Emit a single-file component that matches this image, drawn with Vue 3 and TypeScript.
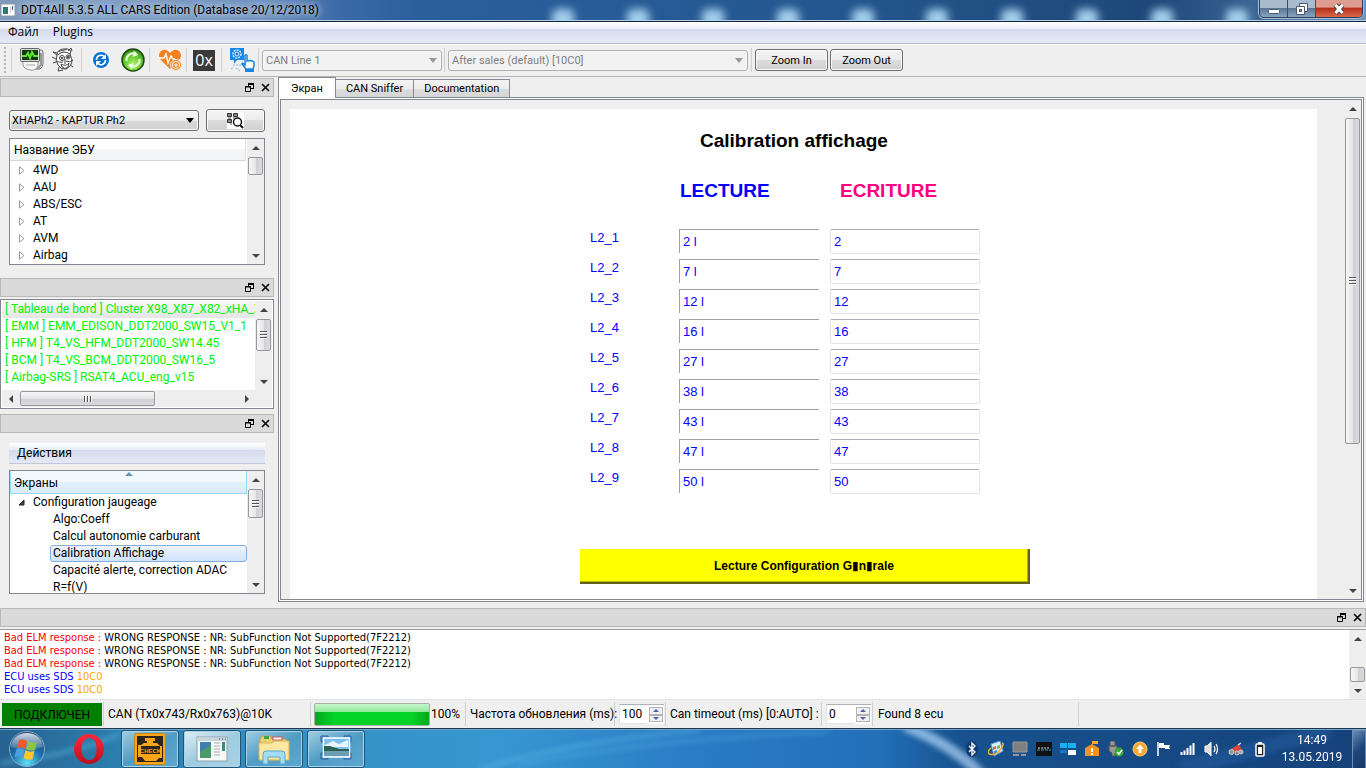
<script setup lang="ts">
import { ref } from 'vue'

interface Row { label: string; read: string; write: string }

const families: string[] = ['4WD', 'AAU', 'ABS/ESC', 'AT', 'AVM', 'Airbag']
const ecus: string[] = [
  '[ Tableau de bord ] Cluster X98_X87_X82_xHA_X98',
  '[ EMM ] EMM_EDISON_DDT2000_SW15_V1_1',
  '[ HFM ] T4_VS_HFM_DDT2000_SW14.45',
  '[ BCM ] T4_VS_BCM_DDT2000_SW16_5',
  '[ Airbag-SRS ] RSAT4_ACU_eng_v15',
]
const screens: string[] = [
  'Algo:Coeff',
  'Calcul autonomie carburant',
  'Calibration Affichage',
  'Capacité alerte, correction ADAC',
  'R=f(V)',
]
const tabs: string[] = ['Экран', 'CAN Sniffer', 'Documentation']
const activeTab = ref('Экран')
const activeScreen = ref('Calibration Affichage')
const rows = ref<Row[]>(
  ['2', '7', '12', '16', '27', '38', '43', '47', '50'].map((v, i) => ({
    label: `L2_${i + 1}`,
    read: `${v} l`,
    write: v,
  })),
)
const refresh = ref('100')
const timeout = ref('0')
</script>

<template>
  <div class="app">
    <header class="titlebar">
      <div class="glows"><i v-for="g in 10" :key="g"></i></div>
      <svg class="app-icon" viewBox="0 0 16 14" width="16" height="14"><rect x="1" y="1" width="14" height="12" fill="#fff" stroke="#8c9aa8" /><rect x="3" y="4" width="5" height="7" fill="#2f7a70" /><path d="M10 5h1M10 7h1M10 9h1" stroke="#999" /><rect x="12" y="3" width="1" height="4" fill="#2a6a9a" /></svg>
      <h1>DDT4All 5.3.5 ALL CARS Edition (Database 20/12/2018)</h1>
      <div class="winbtns">
        <button class="wb" aria-label="Minimize"><svg width="12" height="12" viewBox="0 0 12 12"><rect x=".5" y="6.500" width="11" height="4" rx="1" fill="#fff" stroke="#4a5a72" /></svg></button>
        <button class="wb" aria-label="Restore"><svg width="12" height="12" viewBox="0 0 12 12"><path d="M3.500.5h8v8h-8z" fill="#fff" stroke="#4a5a72" /><path d="M.5 3.500h8v8h-8z" fill="#fff" stroke="#4a5a72" /><rect x="3.500" y="6.500" width="2" height="2" fill="#8090a8" stroke="#4a5a72" /></svg></button>
        <button class="wb close" aria-label="Close"><svg width="12" height="12" viewBox="0 0 12 12"><path d="M2.500 2l7 8M9.500 2l-7 8" stroke="#54404a" stroke-width="5" /><path d="M2.500 2l7 8M9.500 2l-7 8" stroke="#fff" stroke-width="3" /></svg></button>
      </div>
    </header>

    <nav class="menubar"><button>Файл</button><button>Plugins</button></nav>

    <div class="toolbar">
      <span class="grip"></span><span class="sep"></span>
      <button class="tool" aria-label="Scope">
        <svg width="26" height="26" viewBox="0 0 26 26"><path d="M5 3h17q2 0 2 2v12q0 3-3 5H9q-4 0-4-4z" fill="#e4e4e0" stroke="#777" /><path d="M22 6v12l-4 4" fill="none" stroke="#999" stroke-width="2" /><path d="M4 14h15v5q-2 5-8 4-6-1-7-5z" fill="#f7f7f4" stroke="#999" /><path d="M7 18h9" stroke="#aaa" /><rect x="1.500" y="1.500" width="19" height="13" rx="1" fill="#d8d8d4" stroke="#666" /><rect x="3" y="3" width="16" height="10" fill="#123a10" /><path d="M3 9h4l2-3 2 5 2-6 2 4h4" fill="none" stroke="#5be82a" stroke-width="2" /></svg>
      </button>
      <button class="tool wide" aria-label="Expert">
        <svg width="26" height="26" viewBox="0 0 26 26" fill="none" stroke="#444"><path d="M6 8q0-5 6-6 5-1 8 2l-1 3 2 6q0 6-6 9-5 1-8-4-3-4-1-10z" fill="#fff" /><path d="M7 8q3-3 6-3t6 2M8 5l3-2M11 4l5-2M17 4l3-3 1 3M6 8l-4-3 4 1M5 12l-4-2M5 15l-3 1" /><circle cx="11" cy="11" r="2.500" /><circle cx="17" cy="10" r="2" /><path d="M12 15q-4 1-6-1M15 14q4 2 7-1M10 17q5 3 8-1l-1 4q-3 3-6 0zM8 20l-1 4 5-1M14 12v3M19 18l3 2M13 16h2" /><circle cx="11" cy="11" r=".8" fill="#222" /><circle cx="17" cy="10" r=".8" fill="#222" /></svg>
      </button>
      <span class="sep"></span>
      <button class="tool wide" aria-label="Reconnect">
        <svg width="24" height="24" viewBox="0 0 24 24"><path d="M12 2l2 2 3-1 1 3 3 1v3l2 2-2 2v3l-3 1-1 3-3-1-2 2-2-2-3 1-1-3-3-1v-3l-2-2 2-2V7l3-1 1-3 3 1z" fill="#f8f8f8" /><circle cx="12" cy="12" r="8" fill="#0b74d0" /><path d="M7.500 12a4.500 4.500 0 0 1 8-3M16.500 12a4.500 4.500 0 0 1-8 3" fill="none" stroke="#fff" stroke-width="1.600" /><path d="M17 6v5h-5zM7 18v-5h5z" fill="#fff" /></svg>
      </button>
      <button class="tool" aria-label="Refresh">
        <svg width="24" height="24" viewBox="0 0 24 24"><defs><radialGradient id="grn" cx=".5" cy=".7" r=".7"><stop offset="0" stop-color="#b4f56a" /><stop offset=".6" stop-color="#5cc62c" /><stop offset="1" stop-color="#2f8416" /></radialGradient></defs><circle cx="12" cy="12" r="11" fill="url(#grn)" stroke="#1d4a10" stroke-width="1.500" /><path d="M5.500 13a6.500 6.500 0 0 1 9-7M18.500 11a6.500 6.500 0 0 1-9 7" fill="none" stroke="#e9ffd8" stroke-width="2.200" /><path d="M13 2.500l4.500 4.500-6 2zM11 21.500L6.500 17l6-2z" fill="#e9ffd8" /></svg>
      </button>
      <span class="sep"></span>
      <button class="tool" aria-label="Diagnostic">
        <svg width="24" height="24" viewBox="0 0 24 24"><path d="M12 21L3 12Q-1 7 3 3q4-3 8 1l1 1 1-1q4-4 8-1 4 4 0 9z" fill="#f4811f" /><path d="M1 10h5l2-4 2 9 3-7 2 3h2" fill="none" stroke="#fff" stroke-width="1.400" /><circle cx="18" cy="17" r="5.500" fill="#f4811f" stroke="#f0f0f0" /><circle cx="18" cy="17" r="3.600" fill="none" stroke="#fff" /><path d="M18 15v4M16 17h4" stroke="#fff" /></svg>
      </button>
      <span class="sep"></span>
      <button class="tool hex">0x</button>
      <span class="sep"></span>
      <button class="tool" aria-label="Plugins">
        <svg width="26" height="26" viewBox="0 0 26 26"><path d="M1 1h14v12H8l-3 4v-4H1z" fill="#1686e8" /><circle cx="8" cy="7" r="4" fill="none" stroke="#d5ebff" stroke-width="1.500" stroke-dasharray="2 1" /><circle cx="8" cy="7" r="2" fill="none" stroke="#d5ebff" /><path d="M4 18h9M7 21l4 3M2 22l3-2" stroke="#9ab8d8" stroke-dasharray="2 1" /><path d="M16 18V8.500q1-1.500 2 0V14q1-1 2 0 1-1 2 0 1-1 3 1v4l-1 3H17l-4-5q0-2 3 1z" fill="#fff" stroke="#1686e8" stroke-width="1.500" /><path d="M16 23.500h9" stroke="#1686e8" stroke-width="3" /></svg>
      </button>
      <span class="sep"></span>
      <div class="combo dis line"><select disabled aria-label="CAN line"><option>CAN Line 1</option></select></div>
      <span class="sep"></span>
      <div class="combo dis session"><select disabled aria-label="Session"><option>After sales (default) [10C0]</option></select></div>
      <span class="sep"></span>
      <button class="push">Zoom In</button><button class="push">Zoom Out</button>
    </div>

    <div class="middle">
      <aside class="left">
        <section class="dock one">
          <div class="dockhead"><button aria-label="Float"><svg width="9" height="9" viewBox="0 0 9 9"><path d="M3 .5h6M3 1.500h6M3.500 1v2M8.500 1v5M6 5.500h3M0 4h6M.5 3.500v5h5v-5z" fill="none" stroke="#000" /></svg></button><button aria-label="Close"><svg width="9" height="9" viewBox="0 0 9 9"><path d="M1 1l7 7M8 1L1 8" stroke="#000" stroke-width="1.600" /></svg></button></div>
          <div class="vehicle">
            <div class="combo"><select aria-label="Vehicle"><option>XHAPh2 - KAPTUR Ph2</option></select></div>
            <button class="push scan" aria-label="Scan">
              <svg width="17" height="17" viewBox="0 0 17 17"><rect width="17" height="17" fill="#fff" /><path d="M.5 1.500h4v3h-4zM6.500 1.500h4v3h-4zM.5 7.500h4v3h-4z" fill="#888" stroke="#333" /><path d="M1 6h3M6 6h2M3 12h2" stroke="#555" /><circle cx="10.500" cy="10" r="4" fill="#fff" stroke="#111" stroke-width="1.500" /><path d="M13 13l3 3" stroke="#111" stroke-width="2" /></svg>
            </button>
          </div>
          <div class="frame">
            <div class="view">
              <div class="colhead">Название ЭБУ</div>
              <ul class="tree"><li v-for="f in families" :key="f"><svg width="6" height="9" viewBox="0 0 6 9"><path d="M.5.8v7.400L5 4.500z" fill="#fff" stroke="#999" /></svg>{{ f }}</li></ul>
            </div>
            <div class="vscroll"><button class="up" aria-label="Up"></button><div class="track"><div class="thumb t18"></div></div><button class="down" aria-label="Down"></button></div>
          </div>
        </section>

        <section class="dock two">
          <div class="dockhead"><button aria-label="Float"><svg width="9" height="9" viewBox="0 0 9 9"><path d="M3 .5h6M3 1.500h6M3.500 1v2M8.500 1v5M6 5.500h3M0 4h6M.5 3.500v5h5v-5z" fill="none" stroke="#000" /></svg></button><button aria-label="Close"><svg width="9" height="9" viewBox="0 0 9 9"><path d="M1 1l7 7M8 1L1 8" stroke="#000" stroke-width="1.600" /></svg></button></div>
          <div class="eculist">
            <div class="ecurow">
              <ul><li v-for="(e, i) in ecus" :key="e" :class="{ cur: i === 0 }">{{ e }}</li></ul>
              <div class="vscroll"><button class="up" aria-label="Up"></button><div class="track"><div class="thumb t32 gripped"></div></div><button class="down" aria-label="Down"></button></div>
            </div>
            <div class="hscroll"><button class="lt" aria-label="Left"></button><div class="htrack"><div class="hthumb"></div></div><button class="rt" aria-label="Right"></button></div>
          </div>
        </section>

        <section class="dock three">
          <div class="dockhead"><button aria-label="Float"><svg width="9" height="9" viewBox="0 0 9 9"><path d="M3 .5h6M3 1.500h6M3.500 1v2M8.500 1v5M6 5.500h3M0 4h6M.5 3.500v5h5v-5z" fill="none" stroke="#000" /></svg></button><button aria-label="Close"><svg width="9" height="9" viewBox="0 0 9 9"><path d="M1 1l7 7M8 1L1 8" stroke="#000" stroke-width="1.600" /></svg></button></div>
          <div class="actions"><button>Действия</button></div>
          <div class="frame">
            <div class="view">
              <div class="colhead sorted">Экраны</div>
              <div class="parent"><svg width="7" height="7" viewBox="0 0 7 7"><path d="M6 1v5H1z" fill="#444" stroke="#222" /></svg>Configuration jaugeage</div>
              <ul class="sub"><li v-for="s in screens" :key="s" :class="{ sel: s === activeScreen }" @click="activeScreen = s">{{ s }}</li></ul>
            </div>
            <div class="vscroll"><button class="up" aria-label="Up"></button><div class="track"><div class="thumb t29 gripped"></div></div><button class="down" aria-label="Down"></button></div>
          </div>
        </section>
      </aside>

      <main class="central">
        <div class="tabs" role="tablist"><button v-for="t in tabs" :key="t" role="tab" :class="{ on: t === activeTab }" @click="activeTab = t">{{ t }}</button></div>
        <div class="pane">
          <div class="inner">
            <div class="scene">
              <div class="canvas">
                <h2>Calibration affichage</h2>
                <div class="heads"><span class="lec">LECTURE</span><span class="ecr">ECRITURE</span></div>
                <div class="fields">
                  <div v-for="(r, i) in rows" :key="r.label" class="field">
                    <label :for="'w' + i">{{ r.label }}</label>
                    <input class="read" :value="r.read" readonly :aria-label="r.label + ' lecture'">
                    <input :id="'w' + i" v-model="r.write" class="write">
                  </div>
                </div>
                <button class="yellow">Lecture Configuration G<b>▮</b>n<b>▮</b>rale</button>
              </div>
            </div>
            <div class="vscroll"><button class="up" aria-label="Up"></button><div class="track"><div class="thumb big gripped"></div></div><button class="down" aria-label="Down"></button></div>
          </div>
        </div>
      </main>
    </div>

    <section class="logdock">
      <div class="dockhead"><button aria-label="Float"><svg width="9" height="9" viewBox="0 0 9 9"><path d="M3 .5h6M3 1.500h6M3.500 1v2M8.500 1v5M6 5.500h3M0 4h6M.5 3.500v5h5v-5z" fill="none" stroke="#000" /></svg></button><button aria-label="Close"><svg width="9" height="9" viewBox="0 0 9 9"><path d="M1 1l7 7M8 1L1 8" stroke="#000" stroke-width="1.600" /></svg></button></div>
      <div class="log">
        <div class="lines">
          <p v-for="n in 3" :key="n"><span class="red">Bad ELM response : </span>WRONG RESPONSE : NR: SubFunction Not Supported(7F2212)</p>
          <p v-for="n in 2" :key="n + 3"><span class="blue">ECU uses SDS </span><span class="orange">10C0</span></p>
        </div>
        <div class="vscroll"><button class="up" aria-label="Up"></button><div class="track end"><div class="thumb t15"></div></div><button class="down" aria-label="Down"></button></div>
      </div>
    </section>

    <footer class="status">
      <span class="conn">ПОДКЛЮЧЕН</span>
      <span class="cell can">CAN (Tx0x743/Rx0x763)@10K</span>
      <span class="cell prog"><span class="bar" role="progressbar" aria-valuenow="100"></span>100%</span>
      <label class="cell rate" for="rate">Частота обновления (ms):</label>
      <span class="cell spin"><input id="rate" v-model="refresh"><span class="arrows"><button aria-label="More"></button><button class="dn" aria-label="Less"></button></span></span>
      <label class="cell tmo" for="tmo">Can timeout (ms) [0:AUTO] :</label>
      <span class="cell spin"><input id="tmo" v-model="timeout"><span class="arrows"><button aria-label="More"></button><button class="dn" aria-label="Less"></button></span></span>
      <span class="cell found">Found 8 ecu</span>
      <span class="cell"></span>
    </footer>

    <div class="taskbar">
      <svg class="streaks" viewBox="0 0 1366 39" preserveAspectRatio="none"><defs><filter id="soft"><feGaussianBlur stdDeviation="3" /></filter></defs><g filter="url(#soft)" fill="none"><path d="M480 40Q570 12 700 0" stroke="#6cc0ea" stroke-width="4" opacity=".4" /><path d="M520 36Q640 10 830 2" stroke="#5aaee6" stroke-width="4" opacity=".35" /><path d="M905-4Q950 14 980 44" stroke="#a8cdf0" stroke-width="11" opacity=".75" /><path d="M0 34Q70 26 120 4" stroke="#5ab4dc" stroke-width="5" opacity=".5" /><path d="M1180 40L1330 0" stroke="#2a68b0" stroke-width="16" opacity=".35" /></g></svg>
      <button class="start" aria-label="Start">
        <svg width="38" height="38" viewBox="0 0 38 38"><defs><radialGradient id="orb" cx=".5" cy=".9" r=".9"><stop offset="0" stop-color="#5fe0f4" /><stop offset=".5" stop-color="#1f6fae" /><stop offset="1" stop-color="#174070" /></radialGradient><linearGradient id="gl" x2="0" y2="1"><stop offset="0" stop-color="#fff" stop-opacity=".8" /><stop offset="1" stop-color="#fff" stop-opacity=".1" /></linearGradient></defs><circle cx="19" cy="19" r="17.500" fill="url(#orb)" stroke="#88aac4" /><path d="M3 17a16 14 0 0 1 32 0q-16 5-32 0z" fill="url(#gl)" /><path d="M11 10q4-2 8 1l-2 8q-4-3-8-1z" fill="#f05a28" /><path d="M20 11q4 3 9 1l-2 8q-4 2-9-1z" fill="#8cc63e" /><path d="M8.500 19q4-2 8 1l-2 8q-4-3-8-1z" fill="#4c9fe0" /><path d="M17.500 20q4 3 9 1l-2 8q-4 2-9-1z" fill="#fdc82e" /></svg>
      </button>
      <button class="opera" aria-label="Opera">
        <svg width="32" height="32" viewBox="0 0 32 32"><defs><linearGradient id="op" x2="0" y2="1"><stop offset="0" stop-color="#ff2a3c" /><stop offset="1" stop-color="#b8101c" /></linearGradient></defs><path fill-rule="evenodd" d="M16 1a15 15 0 1 0 0 30 15 15 0 1 0 0-30zM16.500 5c5 0 7 5 7 11s-2 11-7 11-8-5-8-11 3-11 8-11z" fill="url(#op)" /></svg>
      </button>
      <button class="task" aria-label="Check engine">
        <svg width="32" height="32" viewBox="0 0 32 32"><rect x=".5" y=".5" width="31" height="31" rx="2" fill="#f9a61a" stroke="#c8841a" /><rect x="3" y="3" width="26" height="26" fill="#2e2418" /><path d="M11 5h10v3h-2v2h4l3 3h2v12h-3l-3 3H11l-3-4H4V12h3l3-2h3V8h-2z" fill="#f9a61a" /><rect x="7" y="13" width="19" height="8" fill="#2e2418" /><text x="16.500" y="19.500" font-family="Liberation Sans" font-size="6" font-weight="700" text-anchor="middle" fill="#f9a61a">CHECK</text></svg>
      </button>
      <button class="task on" aria-label="DDT4All">
        <svg width="32" height="32" viewBox="0 0 32 32"><rect x="1" y="4" width="30" height="24" fill="#f6f8f8" stroke="#8da2ae" /><path d="M1 5h30v3H1z" fill="#c8d4dc" /><path d="M23 6h1M26 6h1M29 6h1" stroke="#333" /><rect x="4" y="9" width="11" height="16" fill="#3d7fae" /><path d="M4 19l11-7v13H4z" fill="#4c9a6a" /><path d="M18 10h6M18 13h6M18 16h6M18 19h6M18 22h6" stroke="#aaa" /><rect x="26" y="9" width="3" height="9" fill="#3b8a7c" /></svg>
      </button>
      <button class="task" aria-label="Explorer">
        <svg width="32" height="32" viewBox="0 0 32 32"><path d="M2 6l2-3h8l2 3h12q3 0 3 3v18H2z" fill="#edcf72" stroke="#c9a64a" /><rect x="6" y="3" width="5" height="3" fill="#3aa84a" /><rect x="15" y="4" width="9" height="3" fill="#fff" stroke="#c55" /><path d="M1 10h13l2-2h15v19H1z" fill="#f9e7a2" stroke="#d4b558" /><path d="M5 31V21q0-3 3-3h16q3 0 3 3v10h-5v-7H10v7z" fill="#a4dcf4" stroke="#5aa8d0" /></svg>
      </button>
      <button class="task" aria-label="Pictures">
        <svg width="32" height="32" viewBox="0 0 32 32"><path d="M1 9V3h7v6zM24 3h7v6h-7zM24 20h7v6h-7zM1 20h7v6H1z" fill="#5a9ad8" stroke="#2560a0" /><rect x="3.500" y="5" width="26" height="19" fill="#7cc0f0" stroke="#fff" stroke-width="1.500" /><path d="M5 12l8-4 6 3 9-4v7H5z" fill="#e8f6fc" /><path d="M4 13l6 0 9 3 10 0v3H4z" fill="#2f5f4e" /><path d="M4 18h25v5H4z" fill="#6a9eb4" /></svg>
      </button>
      <div class="tray">
        <svg viewBox="0 0 16 16"><ellipse cx="8" cy="8" rx="6" ry="8" fill="#123a78" /><path d="M5 5l6 6-3 3V2l3 3-6 6" fill="none" stroke="#fff" stroke-width="1.300" /></svg>
        <svg viewBox="0 0 16 16"><path d="M3 3l9-3 3 10-9 5z" fill="#d8eefa" stroke="#5aa0d0" /><path d="M5 6l3-1v3l-3 1z" fill="#ef6a3a" /><path d="M9 5l3-1v3l-3 1z" fill="#78b83a" /><path d="M6 10l3-1v3l-3 1z" fill="#3a8ae0" /><path d="M1 13q6 2 11-4t2-7M1 13q-2-3 2-6" fill="none" stroke="#f2a83a" stroke-width="1.500" /></svg>
        <svg viewBox="0 0 16 16"><path d="M1 1h14v10H1z" fill="#808080" stroke="#999" /><rect x="1" y="13" width="6" height="2" fill="#999" /><rect x="9" y="13" width="5" height="2" fill="#999" /></svg>
        <svg viewBox="0 0 16 16"><rect y="1" width="16" height="14" fill="#111" /><path d="M2 7h12" stroke="#ddd" stroke-dasharray="2 1" /><path d="M1 9h14" stroke="#38a0e0" stroke-dasharray="3 1" /></svg>
        <svg viewBox="0 0 16 16"><path d="M0 2h7v5H0zM8 2h8v5H8z" fill="#18b0f4" /><path d="M8 9h8v5H8z" fill="#fff" /><path d="M0 9h7v3H0z" fill="#1a78c8" /></svg>
        <svg viewBox="0 0 16 16"><path d="M1 7l7-4 7 4v8H1z" fill="#f2941c" /><path d="M8 4V0h6v3h-5" fill="#f5a82c" /><path d="M8 7v4M8 12v2" stroke="#fff" stroke-width="2" /></svg>
        <svg viewBox="0 0 16 16"><path d="M2 0h5v5H2zM1 5h8v5l-2 2v3H4v-3l-3-2z" fill="#999" stroke="#555" /><circle cx="11" cy="11" r="4.500" fill="#36a83a" /><path d="M9 11l2 2 3-4" fill="none" stroke="#fff" stroke-width="1.500" /></svg>
        <svg viewBox="0 0 16 16"><circle cx="8" cy="8" r="7" fill="#f8a830" stroke="#fbd080" /><path d="M8 3.500L12 8H9.500v4h-3V8H4z" fill="#fff" /></svg>
        <svg viewBox="0 0 16 16"><path d="M2 1v14" stroke="#fff" stroke-width="1.500" /><path d="M3 2h5v2h6l-1 2 1 2H9V7H3z" fill="#fff" /></svg>
        <svg viewBox="0 0 16 16"><path d="M1.500 14v-3M4.500 14V9.500M7.500 14V7M10.500 14V4.500M13.500 14V2" stroke="#fff" stroke-width="2" /></svg>
        <svg viewBox="0 0 16 16"><path d="M1 5h2l4-4v14l-4-4H1z" fill="#ddd" stroke="#fff" /><path d="M10 5q2 3 0 6M12 3q3 5 0 10" fill="none" stroke="#fff" stroke-width="1.200" /></svg>
        <svg viewBox="0 0 16 16"><path d="M3 8l8-5 3 6-7 3z" fill="#d8433a" /><circle cx="3.500" cy="11" r="2.500" fill="#999" stroke="#ccc" /><circle cx="13" cy="11" r="2" fill="#aaa" stroke="#ccc" /><circle cx="9" cy="12" r="2" fill="#888" stroke="#ccc" /><path d="M10 4l3-2" stroke="#ddd" stroke-width="1.500" /></svg>
        <svg viewBox="0 0 16 16"><rect x="4" y="3" width="8" height="12" rx="1" fill="#222" stroke="#fff" stroke-width="1.500" /><rect x="6" y="1" width="4" height="2" fill="#fff" /><path d="M6 6h4v7H6z" fill="#fff" /></svg>
      </div>
      <div class="clock"><span>14:49</span><span>13.05.2019</span></div>
      <button class="desk" aria-label="Show desktop"></button>
    </div>
  </div>
</template>

<style>
body { background: #efefef; }
</style>

<style scoped>
.app { min-height: 100vh; display: flex; flex-direction: column; background: #efefef; font: 12px/17px Roboto, "Open Sans", "Noto Sans", sans-serif; color: #000; overflow: hidden; }
.app * { box-sizing: border-box; }
button, input, select { font: inherit; color: inherit; padding: 0; margin: 0; border: 0; background: none; border-radius: 0; outline: 0; }
ul, h1, h2, p { margin: 0; padding: 0; list-style: none; font-weight: 400; }
svg { display: block; flex: none; }

.titlebar { position: relative; height: 22px; display: flex; align-items: center; background: linear-gradient(90deg, #7d99bb 0, #7f9dc4 100px, #6d90bd 270px, #3c6ba6 335px, #2a5f9c 420px, #255890 800px, #1d4879 1150px, #34608e 1240px, #6f94bb 1366px); border-bottom: 1px solid #16283f; box-shadow: inset 0 -1px #b5cbe2; overflow: hidden; }
.glows { position: absolute; left: 552px; right: 118px; top: 9px; height: 12px; display: flex; justify-content: space-between; }
.glows i { width: 22px; height: 20px; background: #a4cfec; filter: blur(4px); border-radius: 6px; }
.app-icon { margin-top: -1px; }
h1 { font-size: 12px; margin-left: 5px; white-space: nowrap; text-shadow: 0 0 6px #d5e2f0, 0 0 8px #c5d6ea; position: relative; }
.winbtns { position: relative; margin-left: auto; margin-right: 3px; align-self: flex-start; display: flex; height: 18px; border: 1px solid #2c3d55; border-top: 0; border-radius: 0 0 5px 5px; overflow: hidden; box-shadow: 0 0 0 1px #a8bdd4; }
.wb { width: 28px; display: flex; align-items: center; justify-content: center; background: linear-gradient(#a9bccf 0 45%, #5b7796 50%, #8aa5c0); border-right: 1px solid #3c4f68; }
.close { width: 46px; border: 0; background: linear-gradient(#dd9d90 0 40%, #b8301c 50%, #d8694a); }

.menubar { height: 22px; display: flex; background: linear-gradient(#fff 0, #e9eef6 7px, #d4dbed 7px, #e4e9f7 20px); border-bottom: 1px solid #b4b6cf; padding-left: 8px; gap: 14px; }
.menubar button { height: 20px; line-height: 20px; font-family: "Open Sans", "Noto Sans", sans-serif; }

.toolbar { height: 33px; display: flex; align-items: center; border-bottom: 1px solid #b4b4b4; border-top: 1px solid #fff; padding: 0 0 1px 4px; }
.grip { width: 2px; height: 26px; background: repeating-linear-gradient(#b8b8b8 0 2px, transparent 2px 4px); margin-right: 5px; }
.sep { width: 1px; height: 24px; background: #cfcfcf; margin: 0 3px 0 0; flex: none; }
.tool { width: 33px; height: 28px; display: flex; align-items: center; justify-content: center; flex: none; }
.tool.wide { width: 31px; }
.tool.wide + .sep { margin-left: 2px; }
.tool.hex { width: 22px; height: 21px; margin: 0 6px 0 3px; background: #3a3a3a; color: #fff; font: 16px/24px "Open Sans", sans-serif; overflow: hidden; }
.combo { position: relative; height: 21px; font-size: 11px; }
.combo::after { content: ""; position: absolute; right: 5px; top: 8px; border: 4px solid transparent; border-top: 5px solid #000; border-bottom: 0; pointer-events: none; }
.combo select { appearance: none; width: 100%; height: 100%; border: 1px solid #6e6e6e; border-radius: 3px; background: linear-gradient(#f6f6f6, #ebebeb 50%, #d9d9d9 50%, #d2d2d2); padding-left: 2px; opacity: 1; box-shadow: inset 0 0 0 1px #f8f8f8; }
.combo.dis select { background: #f2f2f2; border-color: #acb0b4; color: #808080; padding-left: 3px; }
.combo.dis::after { border-top-color: #999; }
.line { width: 180px; margin-right: 2px; }
.session { width: 300px; margin-right: 3px; }
.push { width: 73px; height: 22px; border: 1px solid #6e6e6e; border-radius: 3px; background: linear-gradient(#f4f4f4, #ebebeb 50%, #dcdcdc 50%, #d0d0d0); box-shadow: inset 0 0 0 1px #fafafa; margin-right: 2px; flex: none; font-size: 11px; }

.middle { flex: 1; display: flex; min-height: 0; }
.left { width: 278px; flex: none; display: flex; flex-direction: column; padding: 1px 4px 0 0; }
.dockhead { height: 19px; background: #dadada; border: 1px solid #b8b8b8; display: flex; justify-content: flex-end; align-items: center; gap: 7px; padding-right: 3px; }
.dockhead button { width: 9px; height: 9px; }
.dock.one { height: 200px; }
.dock.two { height: 136px; }
.vehicle { display: flex; align-items: center; padding: 12px 9px 0; gap: 7px; }
.vehicle .combo { flex: 1; }
.scan { width: 59px; height: 23px; margin: 0; display: flex; align-items: center; justify-content: center; }
.frame { margin: 6px 9px 0; border: 1px solid #828790; background: #fff; display: flex; height: 127px; overflow: hidden; }
.view { flex: 1; min-width: 0; overflow: hidden; }
.colhead { height: 22px; line-height: 23px; padding-left: 4px; background: linear-gradient(#fff 50%, #f4f5f7 50%); border-bottom: 1px solid #d5d5d5; border-right: 1px solid #e2e2e2; margin-right: 1px; }
.tree li { display: flex; align-items: center; height: 17px; gap: 8px; padding-left: 9px; }
.tree { padding-top: 1px; }
.vscroll { width: 17px; flex: none; display: flex; flex-direction: column; background: #eeeeef; }
.vscroll button { height: 17px; display: flex; align-items: center; justify-content: center; flex: none; }
.up::before { content: ""; border: 4px solid transparent; border-bottom: 4px solid #444; border-top: 0; }
.down::before { content: ""; border: 4px solid transparent; border-top: 4px solid #444; border-bottom: 0; }
.track { flex: 1; }
.track.end { display: flex; flex-direction: column; justify-content: flex-end; }
.thumb { width: 15px; margin: 1px 1px 0; border: 1px solid #97999d; border-radius: 2px; background: linear-gradient(90deg, #f6f6f6, #e6e6e8 50%, #cfcfd4 55%, #dadadf); display: flex; align-items: center; justify-content: center; }
.gripped::before { content: ""; width: 7px; height: 8px; background: repeating-linear-gradient(#555 0 1px, #fafafa 1px 2px, transparent 2px 3px); }
.t18 { height: 18px; }
.t32 { height: 32px; }
.t29 { height: 29px; }
.t15 { height: 15px; }
.big { height: 70%; }

.eculist { margin-top: 2px; border: 1px solid #828790; background: #fff; height: 110px; padding: 1px; display: flex; flex-direction: column; }
.ecurow { flex: 1; display: flex; min-height: 0; }
.ecurow ul { flex: 1; min-width: 0; color: #00f300; overflow: hidden; }
.ecurow li { height: 17px; padding-left: 3px; white-space: nowrap; overflow: hidden; }
.cur { background: linear-gradient(#f8f8f8, #e5e5e5); border-radius: 2px; }
.hscroll { height: 17px; background: #eeeeef; display: flex; padding-right: 17px; }
.hscroll button { width: 17px; display: flex; align-items: center; justify-content: center; }
.lt::before { content: ""; border: 4px solid transparent; border-right: 4px solid #444; border-left: 0; }
.rt::before { content: ""; border: 4px solid transparent; border-left: 4px solid #444; border-right: 0; }
.htrack { flex: 1; }
.hthumb { width: 135px; height: 15px; margin: 1px; border: 1px solid #97999d; border-radius: 2px; background: linear-gradient(#f6f6f6, #e6e6e8 50%, #cfcfd4 55%, #dadadf); display: flex; align-items: center; justify-content: center; }
.hthumb::before { content: ""; width: 8px; height: 6px; background: repeating-linear-gradient(90deg, #555 0 1px, #fafafa 1px 2px, transparent 2px 3px); }

.actions { margin: 10px 9px 0; height: 21px; background: linear-gradient(#fff 0, #e6ebf5 7px, #d4dbed 7px, #e4e9f7 20px); padding-left: 8px; border-bottom: 1px solid #c0c6de; }
.actions button { height: 20px; line-height: 21px; }
.three .frame { height: 124px; }
.sorted { position: relative; height: 23px; line-height: 25px; padding-left: 3px; margin: 0; border: 1px solid #96d9f9; border-top: 0; background: linear-gradient(#f2f9fc 50%, #e1f2f9 50%, #d8ecf6); }
.sorted::before { content: ""; position: absolute; left: calc(50% - 4px); top: 1px; border: 4px solid transparent; border-bottom: 4px solid #6a95b0; border-top: 0; }
.parent { display: flex; align-items: center; height: 17px; gap: 8px; padding-left: 8px; }
.sub li { height: 17px; margin-left: 40px; padding-left: 3px; white-space: nowrap; }
.sub .sel { border: 1px solid #84acdd; border-radius: 3px; background: linear-gradient(#eef5ff, #cfe3fd); line-height: 15px; padding-left: 2px; }

.central { flex: 1; min-width: 0; display: flex; flex-direction: column; padding: 0 2px 6px 0; }
.tabs { height: 20px; display: flex; align-items: flex-end; font-size: 11px; }
.tabs button { height: 18px; border: 1px solid #898c95; border-bottom: 0; border-left: 0; background: linear-gradient(#f4f4f4, #ececec 50%, #dcdcdc 50%, #d6d6d6); padding: 0 10px; line-height: 18px; }
.tabs button.on { height: 21px; margin-bottom: -1px; background: #fff; border-left: 1px solid #898c95; position: relative; line-height: 21px; padding: 0 12px; }
.pane { flex: 1; border: 1px solid #828790; padding: 1px; background: #fff; display: flex; min-height: 0; }
.inner { flex: 1; border: 1px solid #828790; background: #efefef; display: flex; min-width: 0; }
.scene { flex: 1; display: flex; padding: 9px 27px 0 9px; min-width: 0; }
.canvas { flex: 1; background: #fff; padding: 20px 0 0 290px; font-family: "Liberation Sans", Arial, sans-serif; }
h2 { font-size: 19px; line-height: 24px; font-weight: 700; width: 450px; padding-left: 120px; white-space: nowrap; }
.heads { display: flex; margin-top: 26px; padding-left: 100px; font-size: 19px; line-height: 24px; font-weight: 700; color: #00f; }
.lec { width: 160px; }
.ecr { color: #ff0080; }
.fields { margin-top: 26px; display: grid; gap: 5px; color: #00f; font-size: 13px; }
.field { display: grid; grid-template-columns: 89px 151px 150px; padding-left: 10px; height: 25px; align-items: start; }
.field label { line-height: 17px; }
.read { width: 140px; height: 24px; border: solid #a0a0a0; border-width: 1px 0 0 1px; padding-left: 3px; }
.write { height: 25px; border: 1px solid #e2e3ea; border-top-color: #abadb3; border-radius: 2px; padding-left: 3px; }
.yellow { margin-top: 55px; display: block; width: 450px; height: 35px; background: #ff0; border: solid #62621a; border-width: 0 2px 2px 0; font-size: 12px; font-weight: 700; box-shadow: inset -1px -1px #b8b800; padding-top: 2px; }
.yellow b { font-family: "DejaVu Sans", sans-serif; font-size: 12px; line-height: 12px; }

.logdock { flex: none; }
.log { display: flex; margin-top: 2px; height: 71px; background: #fff; border-top: 1px solid #a0a0a0; border-bottom: 1px solid #e2e3e6; }
.lines { flex: 1; padding: 1px 4px; font: 11px/13px "DejaVu Sans Condensed", "DejaVu Sans", sans-serif; }
.red { color: #f00; }
.blue { color: #00f; }
.orange { color: #ffa500; }

.status { height: 29px; flex: none; display: flex; align-items: center; border-bottom: 1px solid #20364e; }
.conn { width: 100px; height: 23px; margin: 0 1px 0 2px; line-height: 24px; background: #008000; text-align: center; }
.cell { height: 24px; line-height: 24px; border-left: 1px solid #cfcfcf; padding-left: 4px; display: flex; align-items: center; white-space: nowrap; }
.can { width: 207px; }
.prog { width: 155px; padding-left: 3px; gap: 1px; }
.bar { width: 116px; height: 23px; border: 1px solid #a8b0a8; border-radius: 2px; background: linear-gradient(#c8f6cc 0, #8ee899 8px, transparent 8px), linear-gradient(90deg, #06a81c, #04d428 20px 96px, #06a81c); }
.rate { width: 149px; }
.spin { width: 51px; }
.spin input { width: 28px; height: 20px; background: #fff; border: 1px solid #e0e2e6; border-top-color: #b0b2b8; border-right: 0; padding-left: 2px; }
.arrows { width: 17px; height: 20px; background: #fff; padding: 2px; display: flex; flex-direction: column; border-top: 1px solid #b0b2b8; }
.arrows button { flex: 1; width: 14px; border: 1px solid #b4b4b8; background: #f0f0f0; display: flex; align-items: center; justify-content: center; }
.arrows button::before { content: ""; border: 3px solid transparent; border-bottom: 3px solid #4a62a8; border-top: 0; }
.arrows .dn::before { border-top: 3px solid #4a62a8; border-bottom: 0; }
.tmo { width: 156px; }
.found { width: 206px; padding-left: 5px; }

.taskbar { position: relative; height: 39px; flex: none; display: flex; align-items: center; background: linear-gradient(90deg, #276291 0, #2b7fae 120px, #3491c4 300px, #3897d0 500px, #2a7ec6 680px, #226fb8 880px, #17528e 960px, #164a85 1150px, #17427a 1366px); border-top: 1px solid #6fa8cc; overflow: hidden; }
.streaks { position: absolute; left: 0; top: 0; width: 100%; height: 100%; }
.taskbar > :not(.streaks) { position: relative; }
.start { margin-left: 8px; width: 38px; }
.opera { margin: 0 16px 0 27px; width: 32px; }
.task { width: 58px; height: 38px; margin-right: 4px; border: 1px solid #1d5578; border-radius: 3px; box-shadow: inset 0 0 0 1px #a8d4ea; background: linear-gradient(150deg, #a3cde2, #4f9cc4 50%, #5ea8d0); display: flex; align-items: center; justify-content: center; }
.task.on { background: linear-gradient(150deg, #e0eff6, #9fcbe0 50%, #a8d2e6); }
.tray { margin-left: auto; display: flex; gap: 8px; align-items: center; }
.tray svg { width: 16px; height: 16px; }
.clock { width: 84px; display: flex; flex-direction: column; align-items: center; color: #fff; padding-left: 4px; }
.desk { width: 14px; height: 39px; border: 1px solid #6d8db4; background: linear-gradient(135deg, #6a8cb5, #1c467c 50%, #16386a); }
</style>
